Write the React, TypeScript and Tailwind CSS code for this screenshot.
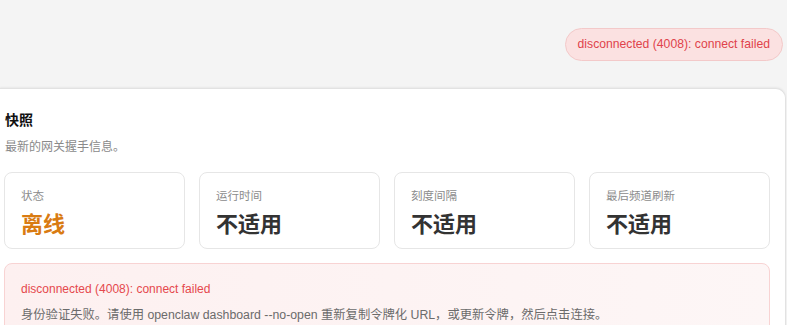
import React from "react";

const font = { fontFamily: '"Liberation Sans", "Noto Sans CJK SC", sans-serif' };

const stats = [
  { label: "状态", value: "离线", accent: true },
  { label: "运行时间", value: "不适用", accent: false },
  { label: "刻度间隔", value: "不适用", accent: false },
  { label: "最后频道刷新", value: "不适用", accent: false },
];

export default function App() {
  return (
    <div className="h-[325px] w-[787px] overflow-hidden bg-[#f4f4f4]" style={font}>
      {/* top bar with connection pill */}
      <div className="flex h-[88px] items-start justify-end pr-[4px] pt-[28px]">
        <div className="flex h-[33px] items-center rounded-full border border-[#f3c9c9] bg-[#fbe1e1] px-[12px] text-[12.2px] text-[#e0434b]">
          disconnected (4008): connect failed
        </div>
      </div>

      {/* snapshot panel */}
      <div className="mr-[1px] h-[240px] rounded-tr-[10px] border-t border-r border-[#e2e2e2] bg-white pl-[4px] pr-[15px] shadow-[0_-1px_2px_rgba(0,0,0,0.05)]">
        <div className="pt-[21px]">
          <h2 className="pl-[1px] text-[14px] font-semibold leading-[20px] text-[#111]">快照</h2>
          <p className="mt-[9px] pl-[1px] text-[12px] leading-[16px] text-[#8a8a8a]">最新的网关握手信息。</p>
        </div>

        <div className="mt-[17px] grid grid-cols-4 gap-[14px]">
          {stats.map((s, i) => (
            <div key={i} className="h-[77px] rounded-[8px] border border-[#e6e6e6] bg-white px-[16px] pt-[15px]">
              <div className="text-[11.5px] leading-[16px] text-[#8c8c8c]">{s.label}</div>
              <div
                className={`mt-[7px] text-[22px] font-bold leading-[28px] ${
                  s.accent ? "text-[#d97b12]" : "text-[#333333]"
                }`}
              >
                {s.value}
              </div>
            </div>
          ))}
        </div>

        <div className="mt-[14px] h-[80px] rounded-[8px] border border-[#f8d3d3] bg-gradient-to-r from-[#fdf0f0] to-[#fdf6f6] px-[16px] pt-[16px]">
          <div className="text-[12px] leading-[18px] text-[#e5484d]">disconnected (4008): connect failed</div>
          <div className="mt-[8px] text-[12.3px] leading-[18px] text-[#6b6b6b]">
            身份验证失败。请使用 openclaw dashboard --no-open 重新复制令牌化 URL，或更新令牌，然后点击连接。
          </div>
        </div>
      </div>
    </div>
  );
}
